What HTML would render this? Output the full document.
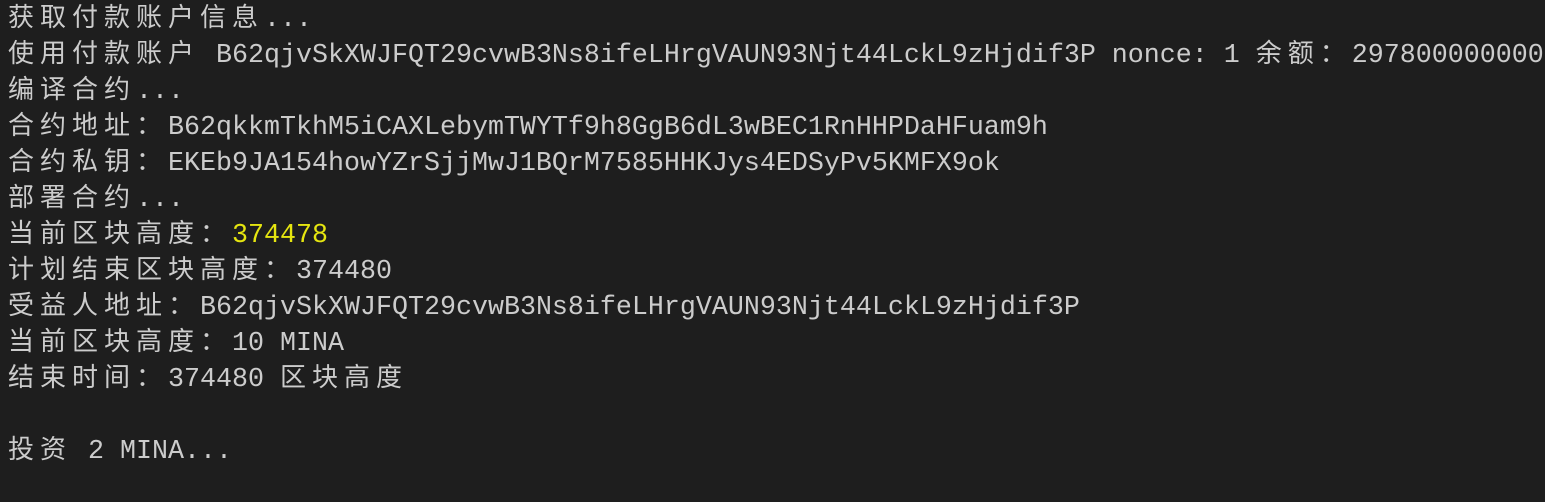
<!DOCTYPE html>
<html><head><meta charset="utf-8"><style>
html,body{margin:0;padding:0;background:#1e1e1e;width:1545px;height:502px;overflow:hidden}
.t{position:absolute;left:8px;top:-2px;color:#cccccc;font-family:"Liberation Mono","Noto Sans CJK SC",monospace;font-size:26.67px;line-height:36px;white-space:pre}
.t div{height:36px;overflow:visible}
.c{font-family:"Noto Sans CJK SC",sans-serif;font-size:26px;letter-spacing:6px;line-height:36px}
.y{color:#e5e510}
</style></head><body><div class="t"><div><span class="c">获取付款账户信息</span>...</div><div><span class="c">使用付款账户</span> B62qjvSkXWJFQT29cvwB3Ns8ifeLHrgVAUN93Njt44LckL9zHjdif3P nonce: 1 <span class="c">余额：</span>297800000000</div><div><span class="c">编译合约</span>...</div><div><span class="c">合约地址：</span>B62qkkmTkhM5iCAXLebymTWYTf9h8GgB6dL3wBEC1RnHHPDaHFuam9h</div><div><span class="c">合约私钥：</span>EKEb9JA154howYZrSjjMwJ1BQrM7585HHKJys4EDSyPv5KMFX9ok</div><div><span class="c">部署合约</span>...</div><div><span class="c">当前区块高度：</span><span class="y">374478</span></div><div><span class="c">计划结束区块高度：</span>374480</div><div><span class="c">受益人地址：</span>B62qjvSkXWJFQT29cvwB3Ns8ifeLHrgVAUN93Njt44LckL9zHjdif3P</div><div><span class="c">当前区块高度：</span>10 MINA</div><div><span class="c">结束时间：</span>374480 <span class="c">区块高度</span></div><div> </div><div><span class="c">投资</span> 2 MINA...</div></div></body></html>
